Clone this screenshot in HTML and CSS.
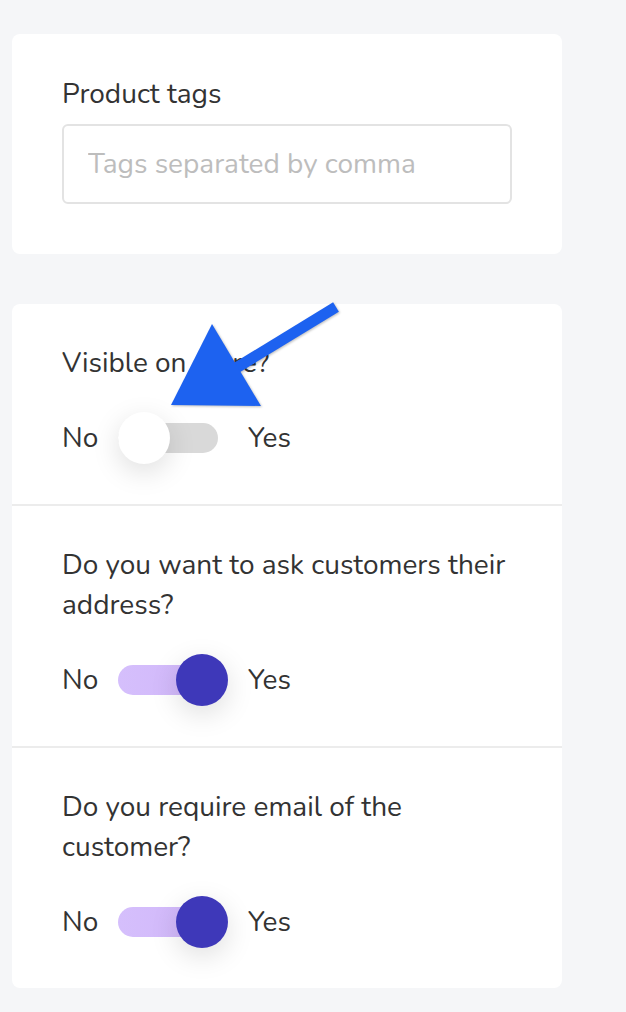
FILE: index.html
```html
<!DOCTYPE html>
<html>
<head>
<meta charset="utf-8">
<link rel="stylesheet" href="styles.css">
</head>
<body>
<div class="page">
  <div class="card card-tags">
    <label class="label" for="tags">Product tags</label>
    <input id="tags" class="input" type="text" placeholder="Tags separated by comma">
  </div>

  <div class="card card-options">
    <div class="section">
      <div class="question">Visible on store?</div>
      <div class="toggle-row">
        <span class="opt">No</span>
        <span class="switch off"><span class="track"></span><span class="knob"></span></span>
        <span class="opt">Yes</span>
      </div>
    </div>
    <div class="section">
      <div class="question">Do you want to ask customers their address?</div>
      <div class="toggle-row">
        <span class="opt">No</span>
        <span class="switch on"><span class="track"></span><span class="knob"></span></span>
        <span class="opt">Yes</span>
      </div>
    </div>
    <div class="section">
      <div class="question">Do you require email of the customer?</div>
      <div class="toggle-row">
        <span class="opt">No</span>
        <span class="switch on"><span class="track"></span><span class="knob"></span></span>
        <span class="opt">Yes</span>
      </div>
    </div>
  </div>

  <svg class="arrow" width="626" height="1012" viewBox="0 0 626 1012">
    <line x1="336" y1="307" x2="228" y2="373" stroke="#1d62f0" stroke-width="11" stroke-linecap="butt"/>
    <polygon points="212,324 171,405 261,406" fill="#1d62f0"/>
  </svg>
</div>
</body>
</html>
```

FILE: styles.css
```css
html, body {
  margin: 0;
  padding: 0;
  background: #f5f6f8;
}

body {
  font-family: "Nunito", "Lato", "Open Sans", sans-serif;
  color: #363636;
}

.page {
  position: relative;
  width: 626px;
  height: 1012px;
  padding: 34px 0 0 12px;
  box-sizing: border-box;
  display: flex;
  flex-direction: column;
  gap: 50px;
}

.card {
  width: 550px;
  background: #ffffff;
  border-radius: 8px;
  box-sizing: border-box;
}

.card-tags {
  padding: 40px 50px 50px;
  display: flex;
  flex-direction: column;
  gap: 10px;
}

.label {
  font-size: 28px;
  line-height: 40px;
  color: #333;
}

.input {
  width: 450px;
  height: 80px;
  box-sizing: border-box;
  border: 2px solid #e3e3e3;
  border-radius: 6px;
  padding: 0 24px;
  font-family: inherit;
  font-size: 28px;
  color: #333;
  outline: none;
  background: #fff;
}

.input::placeholder {
  color: #bdbdbd;
}

.card-options {
  display: flex;
  flex-direction: column;
}

.section {
  padding: 39px 50px 40px;
  display: flex;
  flex-direction: column;
  gap: 29px;
}

.section + .section {
  border-top: 2px solid #ececec;
}

.question {
  font-size: 28px;
  line-height: 40px;
  color: #333;
  width: 450px;
}

.toggle-row {
  display: flex;
  align-items: center;
  height: 52px;
}

.opt {
  font-size: 28px;
  line-height: 40px;
  color: #333;
}

.opt:first-child {
  width: 35px;
}

.switch {
  position: relative;
  width: 110px;
  height: 52px;
  margin: 0 20px 0 21px;
  display: block;
}

.track {
  position: absolute;
  left: 0;
  top: 11px;
  width: 100px;
  height: 30px;
  border-radius: 15px;
  background: #d9d9d9;
}

.knob {
  position: absolute;
  top: 0;
  width: 52px;
  height: 52px;
  border-radius: 50%;
  box-shadow: 0 8px 28px rgba(0, 0, 0, 0.13);
}

.switch.off .knob {
  left: 0;
  background: #ffffff;
}

.switch.on .track {
  background: linear-gradient(90deg, #d5bffc 0%, #d2b9fa 60%, #c5a9f3 100%);
}

.switch.on .knob {
  left: 58px;
  background: #3e38b9;
}

.arrow {
  position: absolute;
  left: 0;
  top: 0;
  pointer-events: none;
  filter: drop-shadow(1px 1px 1px rgba(0, 0, 0, 0.25));
}
```
